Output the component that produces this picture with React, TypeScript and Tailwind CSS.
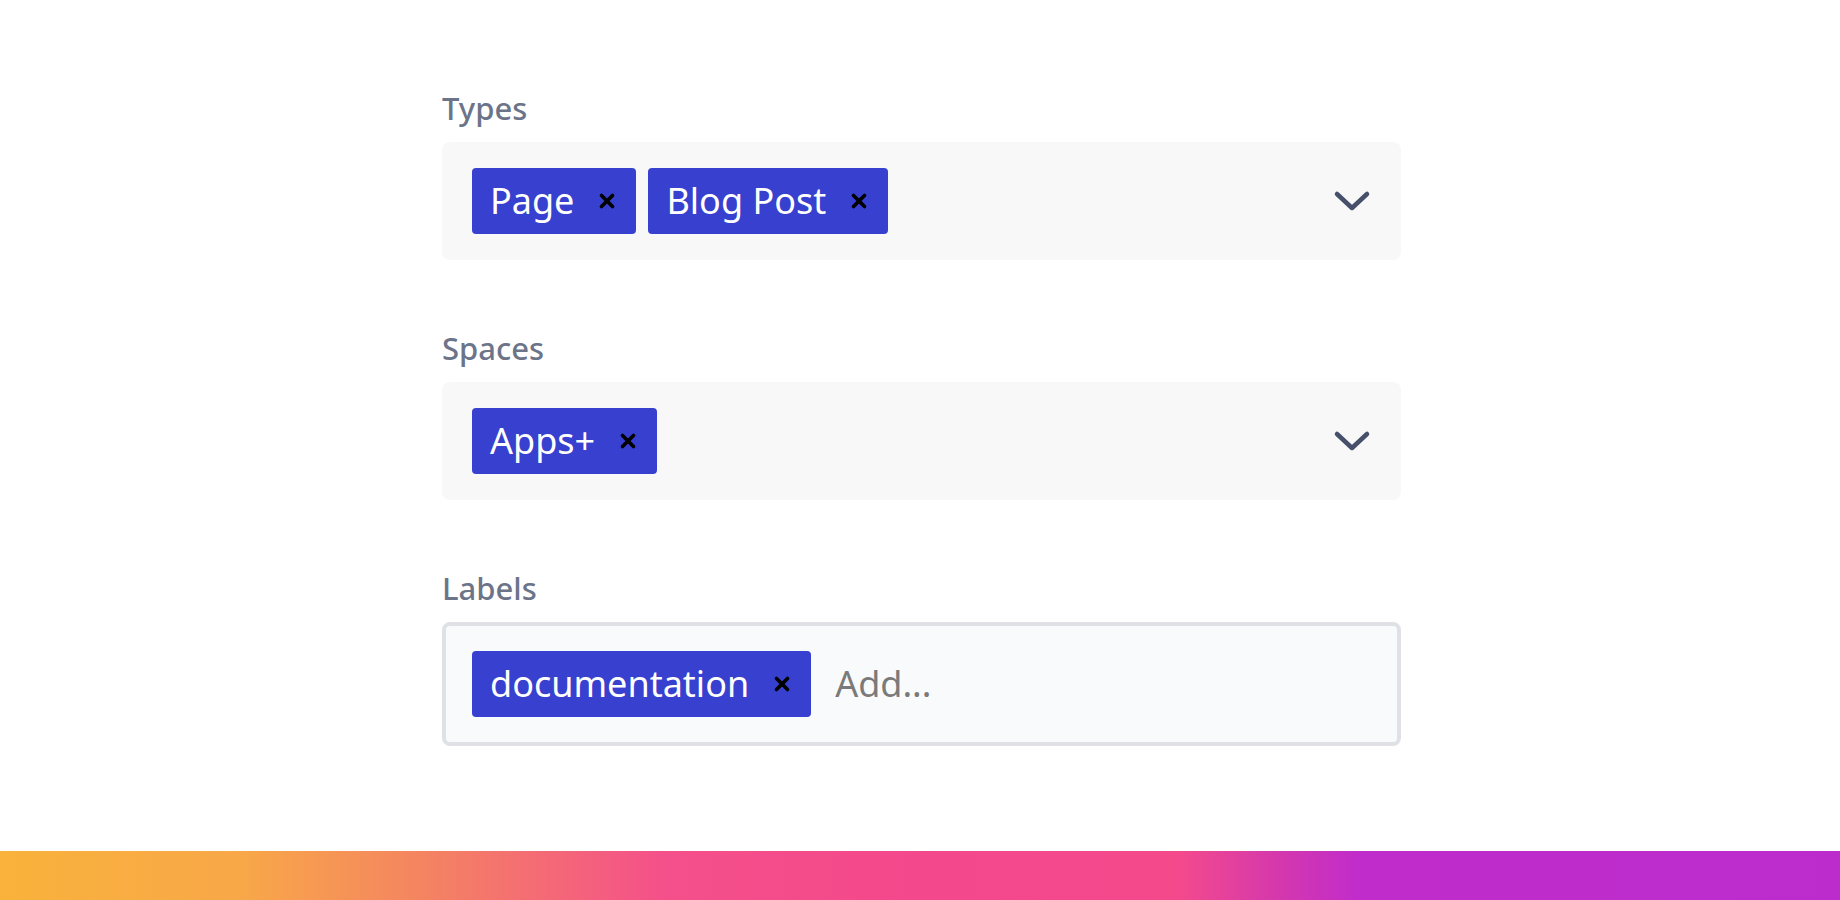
import { X } from "lucide-react"

function Chip({ label }: { label: string }) {
  return (
    <span className="flex items-center h-[66px] rounded-[4px] bg-[#3740cf] pl-[18px] pr-[18px] gap-[22px]">
      <span className="text-white text-[36px] leading-none">{label}</span>
      <X size={22} strokeWidth={4} className="text-black" />
    </span>
  )
}

function Chevron() {
  return (
    <svg width="38" height="24" viewBox="0 0 38 24" fill="none" stroke="#46506a" strokeWidth="4.5" strokeLinecap="round" strokeLinejoin="round">
      <path d="M4 5 L19 19 L34 5" />
    </svg>
  )
}

function Select({ chips }: { chips: string[] }) {
  return (
    <div className="h-[118px] rounded-[8px] bg-[#f8f8f8] flex items-center pl-[30px] pr-[30px]">
      <div className="flex items-center gap-[12px] flex-1">
        {chips.map((c) => (
          <Chip key={c} label={c} />
        ))}
      </div>
      <Chevron />
    </div>
  )
}

export default function App() {
  return (
    <div className="relative w-[1840px] h-[900px] bg-white overflow-hidden" style={{ fontFamily: '"Noto Sans", "Open Sans", sans-serif' }}>
      <div className="ml-[442px] w-[959px] pt-[90px]">
        <div className="text-[31px] leading-[36px] font-medium text-[#6b7489] mb-[16px]">Types</div>
        <Select chips={["Page", "Blog Post"]} />
        <div className="text-[31px] leading-[36px] font-medium text-[#6b7489] mt-[70px] mb-[16px]">Spaces</div>
        <Select chips={["Apps+"]} />
        <div className="text-[31px] leading-[36px] font-medium text-[#6b7489] mt-[70px] mb-[16px]">Labels</div>
        <div className="h-[124px] rounded-[8px] bg-[#f9fafb] border-4 border-[#dfe1e6] flex items-center pl-[26px] gap-[24px]">
          <Chip label="documentation" />
          <span className="text-[36px] leading-none text-[#7a7a7a]">Add...</span>
        </div>
      </div>
      <div className="absolute left-0 right-0 bottom-0 h-[49px] bg-[linear-gradient(90deg,#f9b23b_0%,#f8a848_13%,#f48064_24%,#f4508a_36%,#f4488c_50%,#f44a8c_64%,#d236b0_70%,#c02ccc_74%,#bc2ccc_100%)]" />
    </div>
  )
}
